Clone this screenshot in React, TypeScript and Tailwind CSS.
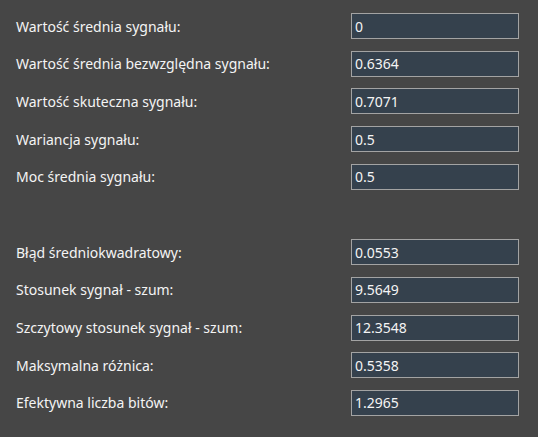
const group1 = [
  { label: "Wartość średnia sygnału:", value: "0" },
  { label: "Wartość średnia bezwzględna sygnału:", value: "0.6364" },
  { label: "Wartość skuteczna sygnału:", value: "0.7071" },
  { label: "Wariancja sygnału:", value: "0.5" },
  { label: "Moc średnia sygnału:", value: "0.5" },
];

const group2 = [
  { label: "Błąd średniokwadratowy:", value: "0.0553" },
  { label: "Stosunek sygnał - szum:", value: "9.5649" },
  { label: "Szczytowy stosunek sygnał - szum:", value: "12.3548" },
  { label: "Maksymalna różnica:", value: "0.5358" },
  { label: "Efektywna liczba bitów:", value: "1.2965" },
];

function Row({ label, value }: { label: string; value: string }) {
  return (
    <div className="flex h-[37.7px] items-start">
      <div className="w-[335px] h-[26px] flex items-center text-[14px]">{label}</div>
      <div className="w-[168px] h-[26px] border border-[#a3a3a3] bg-[#35414d] flex items-center px-[3px] text-[14px]">
        {value}
      </div>
    </div>
  );
}

export default function App() {
  return (
    <div
      className="w-[538px] h-[437px] bg-[#464646] text-[#f4f4f4] pl-4 pt-[13px] overflow-hidden"
      style={{ fontFamily: '"Noto Sans", "Open Sans", sans-serif' }}
    >
      {group1.map((r) => (
        <Row key={r.label} {...r} />
      ))}
      <div className="h-[37.7px]" />
      {group2.map((r) => (
        <Row key={r.label} {...r} />
      ))}
    </div>
  );
}
